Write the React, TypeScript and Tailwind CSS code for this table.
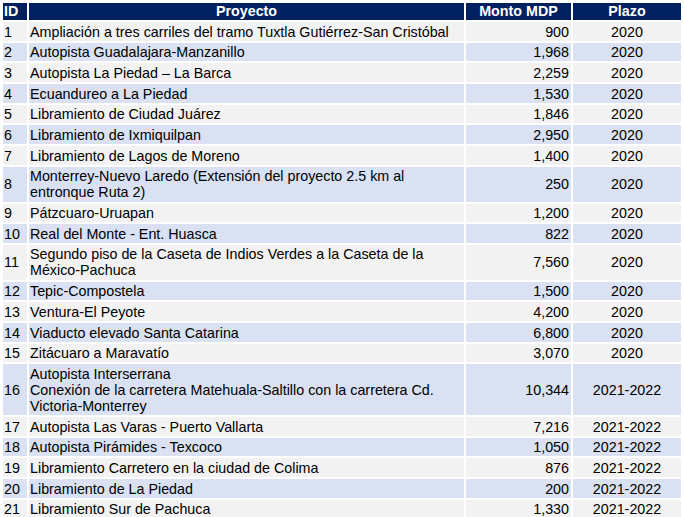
const rows: { id: number; name: string[]; monto: string; plazo: string }[] = [
  { id: 1, name: ['Ampliación a tres carriles del tramo Tuxtla Gutiérrez-San Cristóbal'], monto: '900', plazo: '2020' },
  { id: 2, name: ['Autopista Guadalajara-Manzanillo'], monto: '1,968', plazo: '2020' },
  { id: 3, name: ['Autopista La Piedad – La Barca'], monto: '2,259', plazo: '2020' },
  { id: 4, name: ['Ecuandureo a La Piedad'], monto: '1,530', plazo: '2020' },
  { id: 5, name: ['Libramiento de Ciudad Juárez'], monto: '1,846', plazo: '2020' },
  { id: 6, name: ['Libramiento de Ixmiquilpan'], monto: '2,950', plazo: '2020' },
  { id: 7, name: ['Libramiento de Lagos de Moreno'], monto: '1,400', plazo: '2020' },
  { id: 8, name: ['Monterrey-Nuevo Laredo (Extensión del proyecto 2.5 km al', 'entronque Ruta 2)'], monto: '250', plazo: '2020' },
  { id: 9, name: ['Pátzcuaro-Uruapan'], monto: '1,200', plazo: '2020' },
  { id: 10, name: ['Real del Monte - Ent. Huasca'], monto: '822', plazo: '2020' },
  { id: 11, name: ['Segundo piso de la Caseta de Indios Verdes a la Caseta de la', 'México-Pachuca'], monto: '7,560', plazo: '2020' },
  { id: 12, name: ['Tepic-Compostela'], monto: '1,500', plazo: '2020' },
  { id: 13, name: ['Ventura-El Peyote'], monto: '4,200', plazo: '2020' },
  { id: 14, name: ['Viaducto elevado Santa Catarina'], monto: '6,800', plazo: '2020' },
  { id: 15, name: ['Zitácuaro a Maravatío'], monto: '3,070', plazo: '2020' },
  {
    id: 16,
    name: ['Autopista Interserrana', 'Conexión de la carretera Matehuala-Saltillo con la carretera Cd.', 'Victoria-Monterrey'],
    monto: '10,344',
    plazo: '2021-2022',
  },
  { id: 17, name: ['Autopista Las Varas - Puerto Vallarta'], monto: '7,216', plazo: '2021-2022' },
  { id: 18, name: ['Autopista Pirámides - Texcoco'], monto: '1,050', plazo: '2021-2022' },
  { id: 19, name: ['Libramiento Carretero en la ciudad de Colima'], monto: '876', plazo: '2021-2022' },
  { id: 20, name: ['Libramiento de La Piedad'], monto: '200', plazo: '2021-2022' },
  { id: 21, name: ['Libramiento Sur de Pachuca'], monto: '1,330', plazo: '2021-2022' },
]

export default function App() {
  return (
    <div className="w-[684px] h-[517px] overflow-hidden bg-white font-['Liberation_Sans',Arial,sans-serif] text-[14.3px] text-black">
      <table className="table-fixed border-separate border-spacing-[2px] ml-px mt-px">
        <colgroup>
          <col className="w-[24px]" />
          <col className="w-[435px]" />
          <col className="w-[105px]" />
          <col className="w-[108px]" />
        </colgroup>
        <thead>
          <tr className="bg-[#002060] text-white font-bold leading-[17px]">
            <th className="p-0 pl-px text-left font-bold">ID</th>
            <th className="p-0 text-center font-bold">Proyecto</th>
            <th className="p-0 text-center font-bold">Monto MDP</th>
            <th className="p-0 text-center font-bold">Plazo</th>
          </tr>
        </thead>
        <tbody>
          {rows.map((r) => (
            <tr key={r.id} className={r.id % 2 === 0 ? 'bg-[#d9e1f2] leading-[16px]' : 'bg-[#f2f2f2] leading-[16px]'}>
              <td className="pt-[1.6px] pb-[1.1px] pl-px align-middle">{r.id}</td>
              <td className="pt-[1.6px] pb-[1.1px] pl-px align-middle whitespace-nowrap">
                {r.name.map((line, i) => (
                  <div key={i}>{line}</div>
                ))}
              </td>
              <td className="pt-[1.6px] pb-[1.1px] pr-[2px] text-right align-middle">{r.monto}</td>
              <td className="pt-[1.6px] pb-[1.1px] text-center align-middle">{r.plazo}</td>
            </tr>
          ))}
        </tbody>
      </table>
    </div>
  )
}
